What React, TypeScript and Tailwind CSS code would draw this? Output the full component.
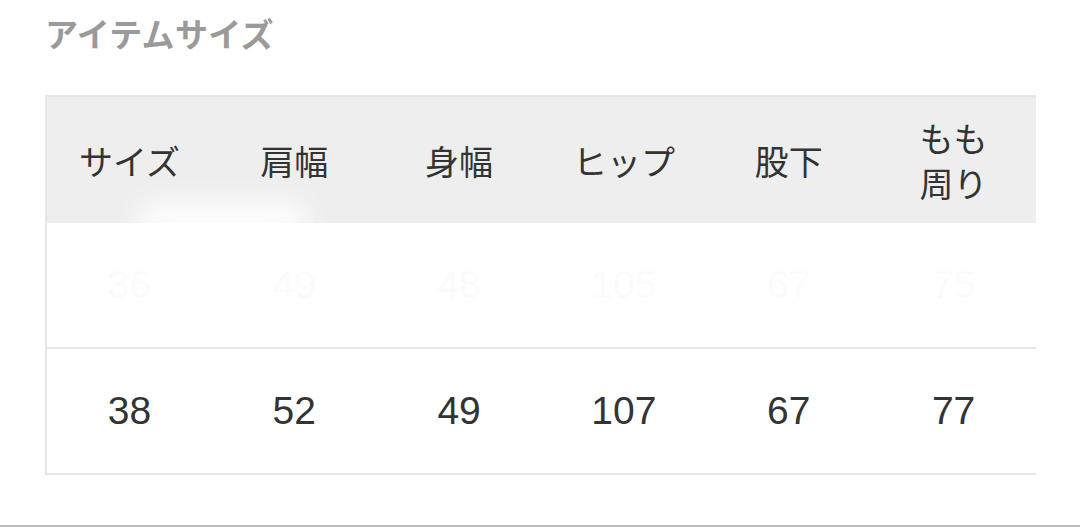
import React from 'react';

const headers: string[][] = [['サイズ'], ['肩幅'], ['身幅'], ['ヒップ'], ['股下'], ['もも', '周り']];
const faded = ['36', '49', '48', '105', '67', '75'];
const values = ['38', '52', '49', '107', '67', '77'];

const App: React.FC = () => {
  return (
    <div className="w-[1080px] h-[527px] bg-white overflow-hidden flex flex-col" style={{ fontFamily: '"Liberation Sans", "Noto Sans CJK JP", sans-serif' }}>
      {/* TITLE */}
      <div className="pl-[45px] pt-[13px] h-[95px]">
        <h2 className="text-[33px] leading-[40px] font-bold text-[#9a9a9a] tracking-[0.3px]" style={{ fontFamily: '"Noto Sans CJK JP", sans-serif' }}>
          アイテムサイズ
        </h2>
      </div>

      {/* SIZE TABLE */}
      <div className="ml-[45px] w-[991px] border-l-2 border-t-2 border-[#e6e6e6] relative">
        <div className="grid grid-cols-6 h-[126px] bg-[#eeeeee] text-[#333] text-[34px] leading-[45px]" style={{ fontFamily: '"Noto Sans CJK JP", sans-serif' }}>
          {headers.map((h, i) => (
            <div key={i} className="flex items-center justify-center text-center">
              <span>
                {h.map((line, j) => (
                  <React.Fragment key={line}>
                    {j > 0 && <br />}
                    {line}
                  </React.Fragment>
                ))}
              </span>
            </div>
          ))}
        </div>
        {/* white smudge over header */}
        <div className="absolute left-[90px] top-[104px] w-[170px] h-[36px] rounded-full bg-white blur-[12px] opacity-90" />

        <div className="grid grid-cols-6 h-[126px] border-b-2 border-[#e6e6e6] text-[39px] text-[#fbfbfb]">
          {faded.map((v, i) => (
            <div key={i} className="flex items-center justify-center">{v}</div>
          ))}
        </div>
        <div className="grid grid-cols-6 h-[126px] border-b-2 border-[#e6e6e6] text-[39px] text-[#333]">
          {values.map((v, i) => (
            <div key={i} className="flex items-center justify-center">{v}</div>
          ))}
        </div>
      </div>

      <div className="flex-1" />
      <div className="h-[2px] bg-[#bdbdbd]" />
    </div>
  );
};

export default App;
